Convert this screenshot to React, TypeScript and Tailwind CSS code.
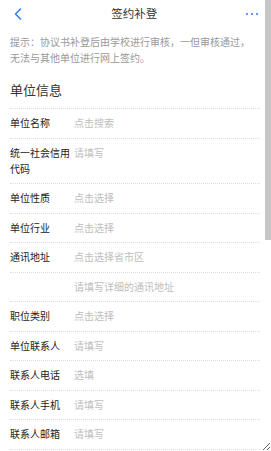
import { ReactNode } from 'react'

type Field = { label: string; hint: string }

const fields: Field[] = [
  { label: '单位名称', hint: '点击搜索' },
  { label: '统一社会信用代码', hint: '请填写' },
  { label: '单位性质', hint: '点击选择' },
  { label: '单位行业', hint: '点击选择' },
  { label: '通讯地址', hint: '点击选择省市区' },
  { label: '', hint: '请填写详细的通讯地址' },
  { label: '职位类别', hint: '点击选择' },
  { label: '单位联系人', hint: '请填写' },
  { label: '联系人电话', hint: '选填' },
  { label: '联系人手机', hint: '请填写' },
  { label: '联系人邮箱', hint: '请填写' },
]

export default function App() {
  return (
    <div
      className="flex h-[451px] w-[271px] resize overflow-hidden bg-white text-[#333]"
      style={{ fontFamily: '"Noto Sans CJK SC", "Noto Sans", sans-serif' }}
    >
      <main className="min-w-0 flex-1 overflow-hidden">
        <header className="flex h-[28px] items-center justify-between pl-[13px] pr-[7px]">
          <svg width="10" height="12" viewBox="0 0 10 12" fill="none">
            <path d="M7.5 1 L2.5 6 L7.5 11" stroke="#2b7de9" strokeWidth="1.5" strokeLinecap="round" strokeLinejoin="round" />
          </svg>
          <h1 className="text-[11.5px] leading-none">签约补登</h1>
          <div className="flex gap-[2.5px]">
            <span className="h-[2.5px] w-[2.5px] rounded-full bg-[#2b7de9]" />
            <span className="h-[2.5px] w-[2.5px] rounded-full bg-[#2b7de9]" />
            <span className="h-[2.5px] w-[2.5px] rounded-full bg-[#2b7de9]" />
          </div>
        </header>

        <p className="pl-[10px] pr-[12px] pt-[6px] text-[10px] leading-[16px] text-[#999]">
          提示：协议书补登后由学校进行审核，一但审核通过，无法与其他单位进行网上签约。
        </p>

        <Section title="单位信息" className="mt-[14px]">
          {fields.map((f, i) => <Row key={i} {...f} />)}
        </Section>
      </main>

      {/* scrollbar */}
      <aside className="w-[6px] shrink-0 bg-white">
        <div className="h-[240px] w-full bg-[#c6c6c6]" />
      </aside>
    </div>
  )
}

function Section({ title, className = '', children }: { title: string; className?: string; children: ReactNode }) {
  return (
    <section className={`pl-[10px] pr-[5px] ${className}`}>
      <h2 className="border-b border-dotted border-[#d6dde3] pb-[8px] text-[13px] leading-[20px]">{title}</h2>
      {children}
    </section>
  )
}

function Row({ label, hint }: Field) {
  return (
    <div className="flex items-start border-b border-dotted border-[#d6dde3] py-[6.25px] text-[10px] leading-[16px]">
      <span className="w-[60px] shrink-0 break-all text-[#222]">{label}</span>
      <span className="ml-[4px] text-[#bdbdbd]">{hint}</span>
    </div>
  )
}
